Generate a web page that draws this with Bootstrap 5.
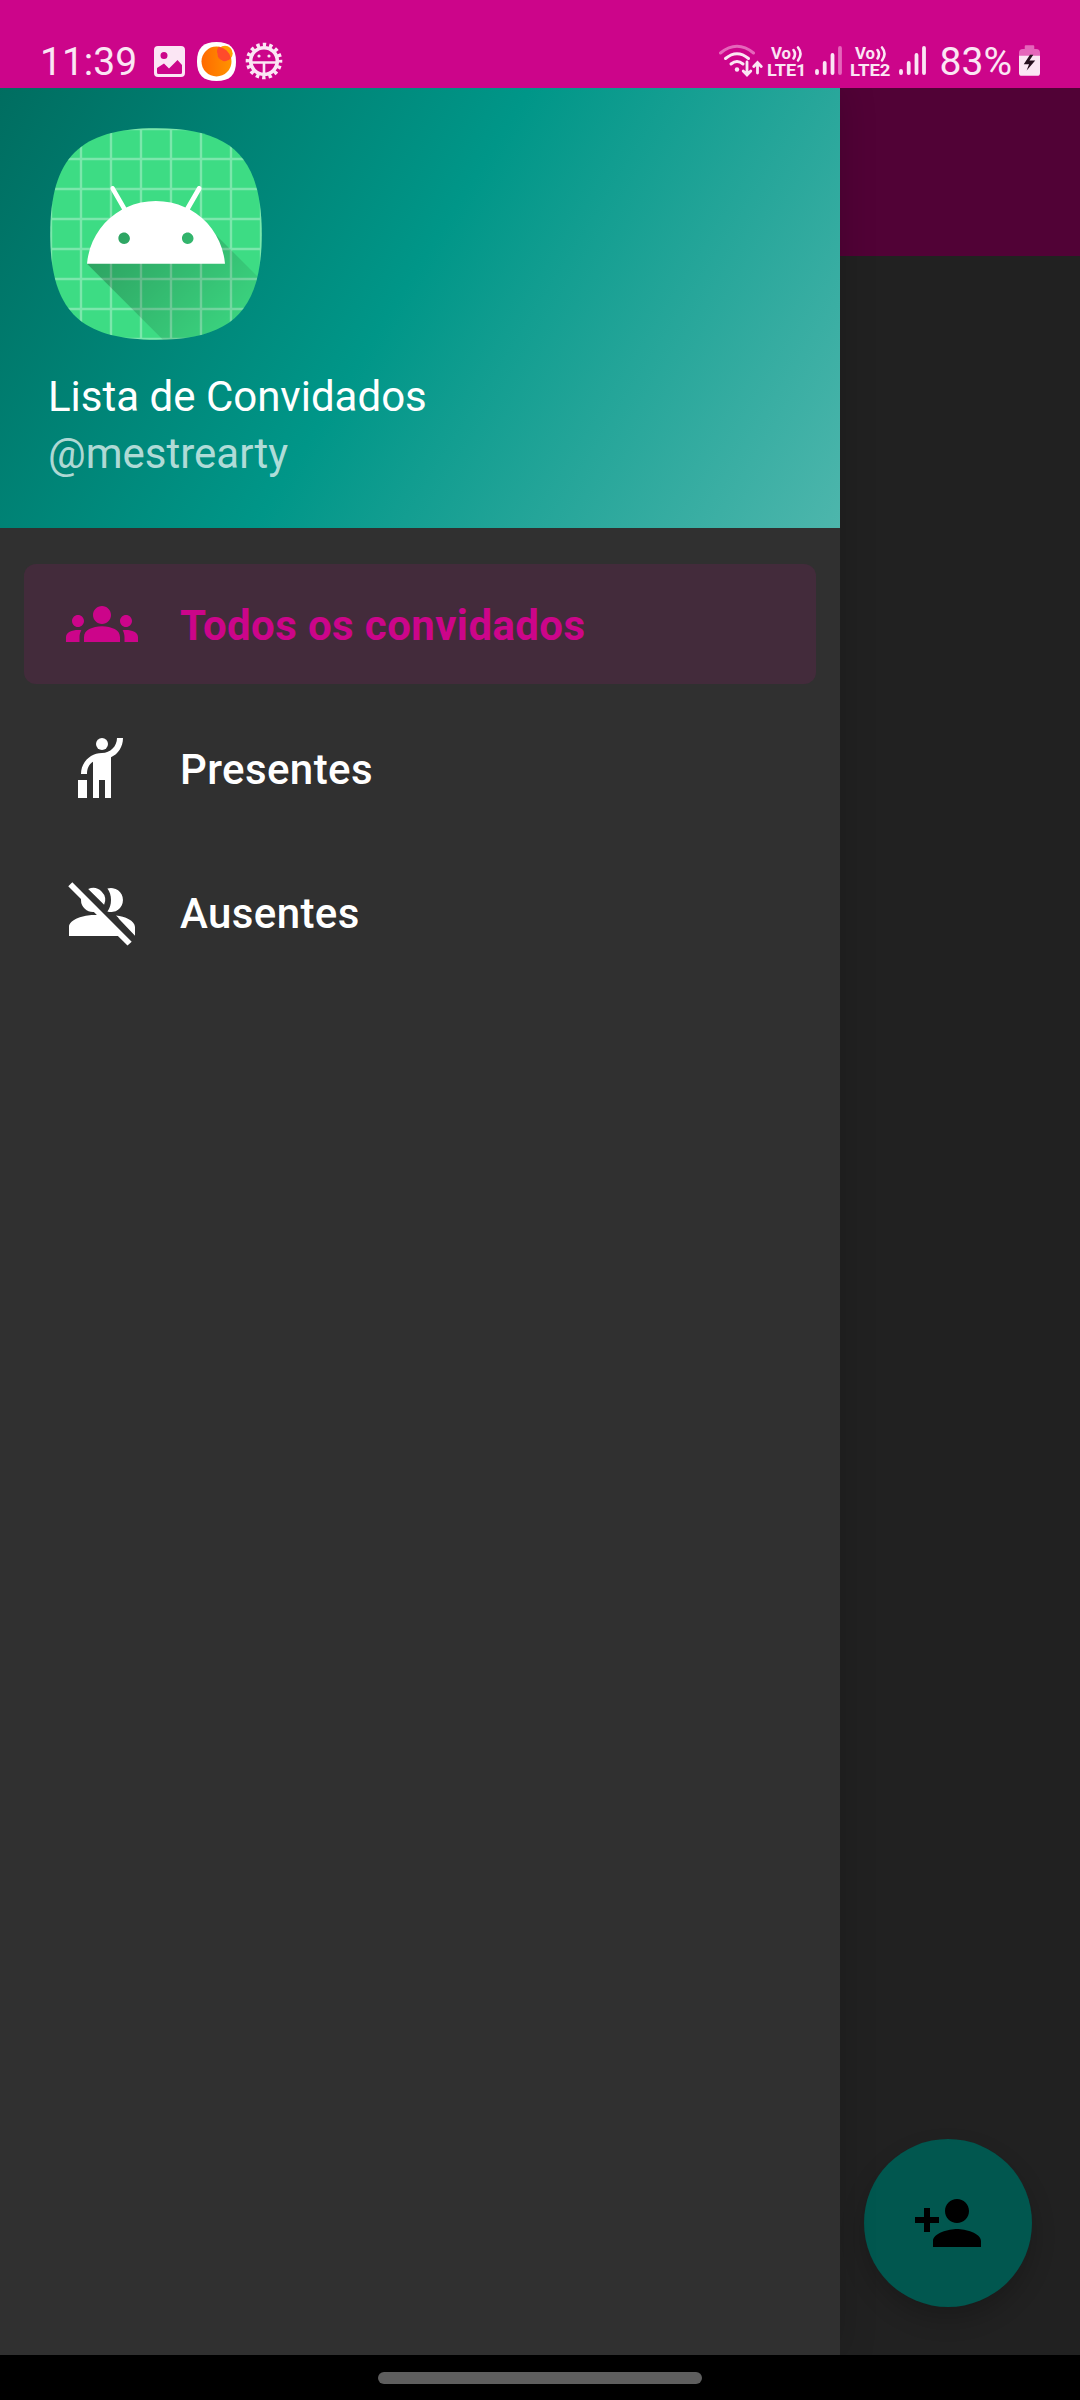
<!DOCTYPE html>
<html lang="pt-BR">
<head>
<meta charset="utf-8">
<meta name="viewport" content="width=device-width, initial-scale=1">
<title>Lista de Convidados</title>
<link href="https://cdn.jsdelivr.net/npm/bootstrap@5.3.0/dist/css/bootstrap.min.css" rel="stylesheet">
<style>
  :root { --brand: #cc058a; }
  body { font-family: Roboto, sans-serif; background: #000; width: 1080px; height: 2400px; overflow: hidden; }
  svg { display: block; flex: none; }
  .screen { height: 2400px; }
  .statusbar { height: 88px; background: var(--brand); color: #fbe6f4; padding: 36px 40px 0 40px; font-size: 39px; line-height: 52px; }
  .clock { width: 114px; }
  .ic-photo { margin-top: 10px; }
  .ic-app { margin: 6px 0 0 12px; }
  .ic-gear { margin: 6px 0 0 9px; }
  .ic-signal { margin-top: 7px; }
  .ic-battery { margin: 9px 0 0 7px; }
  .stage { height: 2267px; background: #212121; }
  .drawer { width: 840px; background: #303030; box-shadow: 0 0 36px rgba(0,0,0,.16); z-index: 2; clip-path: inset(0 -60px 0 0); }
  .drawer-head { height: 440px; padding: 38px 48px 0;
    background: linear-gradient(122.15deg, #00695c, #009688 50%, #4db6ac) 0 -88px / 840px 528px no-repeat; }
  .head-title { font-size: 42px; line-height: 49px; color: #fff; margin-top: 30px; }
  .head-sub { font-size: 42px; line-height: 49px; color: rgba(255,255,255,.7); margin-top: 8px; }
  .menu { padding: 36px 24px; gap: 24px; }
  .menu .nav-link { height: 120px; padding: 0 42px; gap: 42px; border-radius: 12px; font-size: 42px; font-weight: 500; line-height: 48px; letter-spacing: .4px; color: #fff; }
  .menu .nav-link span { padding-top: 3px; }
  .menu .nav-link.active { color: var(--brand); background: #432b3b; font-weight: 700; }
  .appbar { height: 168px; background: #510236; }
  .fab { width: 168px; height: 168px; margin: 0 48px 48px 0; background: #01574f; color: #000; box-shadow: 0 12px 24px rgba(0,0,0,.2); }
  .gesture { height: 45px; background: #000; }
  .pill { width: 324px; height: 12px; background: #5e5e5e; margin-top: 17px; }
</style>
</head>
<body>
<div class="screen d-flex flex-column">
  <header class="statusbar d-flex">
    <span class="clock">11:39</span>
    <svg class="ic-photo" width="31" height="31" viewBox="0 0 31 31"><path fill="#fbe6f4" fill-rule="evenodd" d="M4 0h23a4 4 0 0 1 4 4v23a4 4 0 0 1-4 4H4a4 4 0 0 1-4-4V4a4 4 0 0 1 4-4zM10 6a3.5 3.5 0 1 0 0 7a3.5 3.5 0 0 0 0-7zM3 22v4.500q0 1.500 1.500 1.500h22q1.500 0 1.500-1.500V19l-4.500-5L15 22.500l-5-5z"/></svg>
    <svg class="ic-app" width="39" height="39" viewBox="0 0 39 39">
      <defs><linearGradient id="or" x1="0" x2="1"><stop stop-color="#ff6a00"/><stop offset="1" stop-color="#ff9300"/></linearGradient></defs>
      <path fill="#fff" d="M19.500 0C33 0 39 6 39 19.500S33 39 19.500 39 0 33 0 19.500 6 0 19.500 0z"/>
      <circle cx="19.500" cy="19.500" r="15" fill="url(#or)"/><circle cx="28" cy="11.500" r="7.700" fill="#ffa000"/>
      <path fill="#ff4b2b" d="M20.300 11.500a7.700 7.700 0 0 1 1.400-6.800A15 15 0 0 1 34 16.300 7.700 7.700 0 0 1 20.300 11.500z"/>
    </svg>
    <svg class="ic-gear" width="38" height="38" viewBox="-19 -19 38 38" fill="none" stroke="#fbe6f4">
      <circle r="13.300" stroke-width="3.600"/><circle r="16.300" stroke-width="4" stroke-dasharray="3.400 3" stroke-dashoffset="1.700"/>
      <path stroke-width="2.600" d="M-13 1.500H13M0 1.500V14"/><g fill="#fbe6f4" stroke="none"><circle cx="-5" cy="-5" r="1.600"/><circle cx="5" cy="-5" r="1.600"/></g>
    </svg>
    <svg class="ic-signal ms-auto" width="222" height="36" viewBox="718 43 222 36" fill="none" stroke="#fbe6f4" stroke-width="3" stroke-linecap="round">
      <path stroke="#e566bb" d="M720.500 53q16.500-13.500 33 0"/>
      <path d="M725.500 58.500q11.500-9.500 23 0M731 64q6-5 12 0"/><circle cx="737" cy="69.500" r="2.200" fill="#fbe6f4" stroke="none"/>
      <path stroke-width="2.800" d="M747 62v12.500M743.200 71l3.800 4 3.800-4M757.500 73V63M753.700 66.500l3.800-4 3.800 4"/>
      <g fill="#fbe6f4" stroke="none" font-family="Roboto" font-weight="700">
        <text x="771" y="58.500" font-size="16.500" textLength="20" lengthAdjust="spacingAndGlyphs">Vo</text>
        <text x="767" y="75.800" font-size="17" textLength="39.500" lengthAdjust="spacingAndGlyphs">LTE1</text>
        <text x="855" y="58.500" font-size="16.500" textLength="20" lengthAdjust="spacingAndGlyphs">Vo</text>
        <text x="850" y="75.800" font-size="17" textLength="40.500" lengthAdjust="spacingAndGlyphs">LTE2</text>
      </g>
      <path stroke-width="2.600" d="M793.500 50q3 4 0 8.500M798 47.500q5 6 0 13M877.500 50q3 4 0 8.500M882 47.500q5 6 0 13"/>
      <path stroke-width="3.800" d="M817 71v2M824.700 63v10M832.500 55v18M901 71v2M908.700 63v10M916.500 55v18M924 48v25"/>
      <path stroke-width="3.800" stroke="#e566bb" d="M840 48v25"/>
    </svg>
    <span>83%</span>
    <svg class="ic-battery" width="21" height="32" viewBox="0 0 22 33">
      <path fill="#e566bb" d="M6 1q0-1 1-1h8q1 0 1 1v3h2q4 0 4 4v4H0V8q0-4 4-4h2z"/><path fill="#fbe6f4" d="M0 11h22v18q0 3-3 3H3q-3 0-3-3z"/>
      <path fill="#26101f" d="M11.500 10L5 20h5.500l-2.500 6.500L17 16h-6l4-6z"/>
    </svg>
  </header>

  <main class="stage d-flex">
    <aside class="drawer d-flex flex-column flex-shrink-0 position-relative">
      <div class="drawer-head">
        <svg width="216" height="216" viewBox="18 18 72 72">
          <defs>
            <clipPath id="sq"><path d="M54 18.750C79.400 18.750 89.250 28.600 89.250 54S79.400 89.250 54 89.250 18.750 79.400 18.750 54 28.600 18.750 54 18.750z"/></clipPath>
            <linearGradient id="sh" gradientUnits="userSpaceOnUse" x1="42.949" y1="49.598" x2="85.848" y2="92.496"><stop stop-opacity=".267"/><stop offset="1" stop-opacity="0"/></linearGradient>
          </defs>
          <g clip-path="url(#sq)">
            <path fill="#3ddc84" d="M0 0h108v108H0z"/>
            <path stroke="#fff" stroke-opacity=".33" stroke-width=".8" d="M19 0v108M29 0v108M39 0v108M49 0v108M59 0v108M69 0v108M79 0v108M89 0v108M0 19h108M0 29h108M0 39h108M0 49h108M0 59h108M0 69h108M0 79h108M0 89h108"/>
            <path fill="url(#sh)" d="M31,63.928c0,0 6.4,-11 12.1,-13.1c7.2,-2.6 26,-1.4 26,-1.4l38.1,38.1L107,108.928l-32,-1L31,63.928z"/>
            <path fill="#fff" d="M65.3,45.828l3.8,-6.6c0.2,-0.4 0.1,-0.9 -0.3,-1.1c-0.4,-0.2 -0.9,-0.1 -1.1,0.3l-3.9,6.7c-6.3,-2.8 -13.4,-2.8 -19.7,0l-3.9,-6.7c-0.2,-0.4 -0.7,-0.5 -1.1,-0.3C38.8,38.328 38.7,38.828 38.9,39.228l3.8,6.6C36.2,49.428 31.7,56.028 31,63.928h46C76.3,56.028 71.8,49.428 65.3,45.828zM43.4,57.328c-0.8,0 -1.5,-0.5 -1.8,-1.2c-0.3,-0.7 -0.1,-1.5 0.4,-2.1c0.5,-0.5 1.4,-0.7 2.1,-0.4c0.7,0.3 1.2,1 1.2,1.8C45.3,56.528 44.5,57.328 43.4,57.328L43.4,57.328zM64.6,57.328c-0.8,0 -1.5,-0.5 -1.8,-1.2s-0.1,-1.5 0.4,-2.1c0.5,-0.5 1.4,-0.7 2.1,-0.4c0.7,0.3 1.2,1 1.2,1.8C66.5,56.528 65.6,57.328 64.6,57.328L64.6,57.328z"/>
          </g>
        </svg>
        <div class="head-title">Lista de Convidados</div>
        <div class="head-sub">@mestrearty</div>
      </div>
      <nav class="menu nav flex-column">
        <a class="nav-link active d-flex align-items-center" href="#">
          <svg width="72" height="72" viewBox="0 0 24 24" fill="currentColor"><path d="M12,12.75c1.63,0 3.07,0.39 4.24,0.9c1.08,0.48 1.76,1.56 1.76,2.73L18,18H6l0,-1.61c0,-1.18 0.68,-2.26 1.76,-2.73C8.93,13.14 10.37,12.75 12,12.75zM4,13c1.1,0 2,-0.9 2,-2c0,-1.1 -0.9,-2 -2,-2s-2,0.9 -2,2C2,12.1 2.9,13 4,13zM5.13,14.1C4.76,14.04 4.39,14 4,14c-0.99,0 -1.93,0.21 -2.78,0.58C0.48,14.9 0,15.62 0,16.43V18l4.5,0v-1.61C4.5,15.56 4.73,14.78 5.13,14.1zM20,13c1.1,0 2,-0.9 2,-2c0,-1.1 -0.9,-2 -2,-2s-2,0.9 -2,2C18,12.1 18.9,13 20,13zM24,16.43c0,-0.81 -0.48,-1.53 -1.22,-1.85C21.93,14.21 20.99,14 20,14c-0.39,0 -0.76,0.04 -1.13,0.1c0.4,0.68 0.63,1.46 0.63,2.29V18l4.5,0V16.43zM12,6c1.66,0 3,1.34 3,3c0,1.66 -1.34,3 -3,3s-3,-1.34 -3,-3C9,7.34 10.34,6 12,6z"/></svg>
          <span>Todos os convidados</span>
        </a>
        <a class="nav-link d-flex align-items-center" href="#">
          <svg width="72" height="72" viewBox="0 0 24 24" fill="currentColor"><circle cx="12" cy="4" r="2"/><path d="M17 2C17 4.760 14.760 7 12 7 8.100 7 5 10.100 5 14h2c0-2 .8-3.400 2-4.100V22h2v-6h2v6h2V8.400C17.400 7.400 19 4.900 19 2zM4 16h3v6H4z"/></svg>
          <span>Presentes</span>
        </a>
        <a class="nav-link d-flex align-items-center" href="#">
          <svg width="72" height="72" viewBox="0 0 24 24" fill="currentColor"><path d="M2.100 2.100L.75 3.450 5 7.700V8a4 4 0 0 0 4.300 4L10.300 13.030Q9.700 13 9 13c-2.670 0-8 1.340-8 4v3h16.300l3.200 3.200 1.400-1.300z"/><path d="M7.400 4.350a4 4 0 0 1 5.300 5.250zM13.800 4.180C14.600 5.200 15 6.600 15 8s-.4 2.800-1.200 3.820A4 4 0 1 0 13.800 4.180zM16.670 13.130c.5.4.8.8 1.100 1.300L23 19.900V17c0-2.200-3.400-3.600-6.330-3.870z"/></svg>
          <span>Ausentes</span>
        </a>
      </nav>
    </aside>
    <section class="flex-grow-1 d-flex flex-column">
      <div class="appbar"></div>
      <button class="fab btn border-0 rounded-circle p-0 mt-auto ms-auto d-flex align-items-center justify-content-center" aria-label="Adicionar convidado">
        <svg width="72" height="72" viewBox="0 0 24 24" fill="currentColor"><path d="M15,12c2.21,0 4,-1.79 4,-4s-1.790,-4 -4,-4 -4,1.790 -4,4 1.790,4 4,4zM6,10L6,7L4,7v3L1,10v2h3v3h2v-3h3v-2L6,10zM15,14c-2.670,0 -8,1.340 -8,4v2h16v-2c0,-2.660 -5.330,-4 -8,-4z"/></svg>
      </button>
    </section>
  </main>
  <footer class="gesture d-flex justify-content-center align-items-start"><div class="pill rounded-pill"></div></footer>
</div>
<script src="https://cdn.jsdelivr.net/npm/bootstrap@5.3.0/dist/js/bootstrap.bundle.min.js"></script>
</body>
</html>
